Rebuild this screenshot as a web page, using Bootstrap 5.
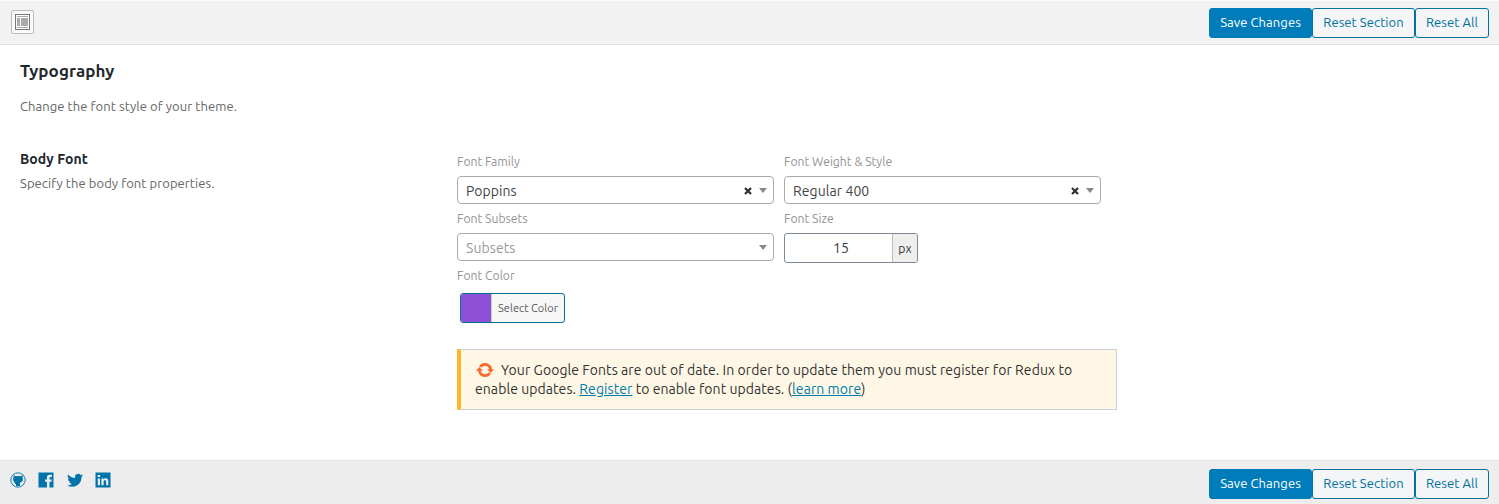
<!DOCTYPE html>
<html lang="en">
<head>
<meta charset="utf-8">
<meta name="viewport" content="width=device-width, initial-scale=1">
<title>Typography</title>
<link rel="stylesheet" href="https://cdn.jsdelivr.net/npm/bootstrap@5.3.0/dist/css/bootstrap.min.css">
<style>
body{font-family:Ubuntu,"Noto Sans","Open Sans",sans-serif;font-size:13px;line-height:19px;letter-spacing:.07px;color:#3c434a;background:#fff;height:504px;overflow:hidden}
.bar-top{height:45px;background:#f2f2f2;border-top:1px solid #fbfbfb;border-bottom:1px solid #dedede;padding:7px 10px 0 11px}
.bar-bottom{height:44px;background:#ededed;border-top:1px solid #e2e2e2;padding:8px 10px 0 10px}
.bar-actions .btn{height:30px;font-size:13px;line-height:26px;padding:0 0 2px;border-radius:3px;border-color:#0071a1;color:#0071a1;background:#f3f5f6;letter-spacing:.08px}
.bar-actions .btn-primary{background:#007cba;border-color:#007cba;color:#fff}
.w-save,.w-section{width:103px}
.w-all{width:74px}
.expand-btn{width:23px;height:24px;margin-top:2px;background:#fafafa;border:1px solid #bbb;border-radius:2px;padding:0;line-height:0}
.page-body{height:415px;padding-left:20px}
.page-title{font-size:17px;line-height:24px;font-weight:700;color:#23282d;margin:0;padding-top:14px}
.page-desc{color:#666;margin:14px 0 33px}
.field-col{width:437px}
.field-title{font-size:14px;font-weight:700;color:#23282d;line-height:20px}
.field-desc{color:#666;margin-top:5px}
.controls{padding-top:3px}
.control-row{gap:10px}
.control-row + .control-row{margin-top:5px}
.label-text{font-size:12.2px;line-height:20px;letter-spacing:0;color:#949494;display:block;height:24px}
.label-color{margin-top:3px}
.cell{width:317px}
.select-box{height:28px;border:1px solid #aaa;border-radius:4px;background:#fff;padding:0 6px 0 8px;font-size:14px;color:#444}
.select-box span{padding-top:2px}
.select-box.is-empty{color:#999}
.clear-x{margin:1px 7px 0 0}
.size-box{width:134px;height:30px;border:1px solid #7e8993;border-radius:3px;overflow:hidden;font-size:14px;color:#32373c}
.size-value{padding-left:5px}
.size-unit{width:25px;background:#eee;border-left:1px solid #bbb;font-size:12.3px}
.color-btn{width:105px;height:30px;border:1px solid #0071a1;border-radius:3px;background:#f7f7f7;overflow:hidden;margin:3px 0 0 3px;font-size:11px;letter-spacing:.04px;color:#555}
.swatch{width:31px;background:#8f50d8;border-right:1px solid #ccc}
.notice{width:660px;height:61px;margin-top:26px;background:#fff7e5;border:1px solid #ccd0d4;border-left:4px solid #ffb52b;padding:11px 14px;font-size:14px;line-height:19px;color:#333;white-space:nowrap}
.notice a{color:#007cae}
.notice svg{margin:-2px 7px 0 1px}
.social{color:#0073aa;gap:12.4px;padding-top:3px}
</style>
</head>
<body>
<header class="bar-top d-flex justify-content-between">
  <button class="expand-btn d-flex align-items-center justify-content-center" aria-label="Expand">
    <svg width="15" height="16" viewBox="0 0 15 16" shape-rendering="crispEdges"><path fill="#fff" stroke="#777" d="M.5.5h14v15H.5z"/><path fill="#aaa" d="M2 2h11v1H2zM2 4h3v8H2zM6 4h7v8H6zM2 13h11v1H2z"/></svg>
  </button>
  <div class="bar-actions d-flex"><button class="btn btn-primary w-save">Save Changes</button><button class="btn w-section">Reset Section</button><button class="btn w-all">Reset All</button></div>
</header>
<main class="page-body">
  <h1 class="page-title">Typography</h1>
  <p class="page-desc">Change the font style of your theme.</p>
  <div class="d-flex">
    <div class="field-col">
      <div class="field-title">Body Font</div>
      <div class="field-desc">Specify the body font properties.</div>
    </div>
    <div class="controls">
      <div class="control-row d-flex">
        <div class="cell"><label class="label-text">Font Family</label>
          <div class="select-box d-flex align-items-center"><span class="me-auto">Poppins</span><svg class="clear-x" width="8" height="8" viewBox="0 0 8 8"><path d="M1 1l6 6M7 1L1 7" stroke="#333" stroke-width="2.3"/></svg><svg width="8" height="5" viewBox="0 0 8 5"><path fill="#888" d="M0 0h8L4 5z"/></svg></div></div>
        <div class="cell"><label class="label-text">Font Weight &amp; Style</label>
          <div class="select-box d-flex align-items-center"><span class="me-auto">Regular 400</span><svg class="clear-x" width="8" height="8" viewBox="0 0 8 8"><path d="M1 1l6 6M7 1L1 7" stroke="#333" stroke-width="2.3"/></svg><svg width="8" height="5" viewBox="0 0 8 5"><path fill="#888" d="M0 0h8L4 5z"/></svg></div></div>
      </div>
      <div class="control-row d-flex">
        <div class="cell"><label class="label-text">Font Subsets</label>
          <div class="select-box is-empty d-flex align-items-center"><span class="me-auto">Subsets</span><svg width="8" height="5" viewBox="0 0 8 5"><path fill="#888" d="M0 0h8L4 5z"/></svg></div></div>
        <div><label class="label-text">Font Size</label>
          <div class="size-box d-flex"><span class="size-value flex-grow-1 d-flex align-items-center justify-content-center">15</span><span class="size-unit d-flex align-items-center justify-content-center">px</span></div></div>
      </div>
      <label class="label-text label-color">Font Color</label>
      <div class="color-btn d-flex"><span class="swatch"></span><span class="flex-grow-1 d-flex align-items-center justify-content-center">Select Color</span></div>
      <div class="notice"><svg width="18" height="16" viewBox="0 0 18 16"><g fill="none" stroke="#f9692d" stroke-width="2.8"><path d="M4.300 5A5.600 5.600 0 0 1 14.600 8"/><path d="M13.700 11A5.600 5.600 0 0 1 3.400 8"/></g><path fill="#f9692d" d="M11.200 7.200H18l-3.400 3.700zM0 8.800h6.800L3.400 5.100z"/></svg><span>Your Google Fonts are out of date. In order to update them you must register for Redux to</span><br><span>enable updates. <a href="#">Register</a> to enable font updates. (<a href="#">learn more</a>)</span></div>
    </div>
  </div>
</main>
<footer class="bar-bottom d-flex justify-content-between">
  <div class="social d-flex">
    <svg width="16" height="16" viewBox="0 0 16 16"><circle cx="8" cy="8" r="7.2" fill="none" stroke="currentColor" stroke-width=".9"/><path fill="currentColor" d="M3.600 3.200l2.200 1.100q2.200-.5 4.400 0l2.200-1.100.2 2.500q1.200 4-2.600 4.800v3.600H6v-2.200q-1.600.1-2.300-1.600 1.200.4 2.200.1Q2.200 9.700 3.400 5.700z"/></svg>
    <svg width="16" height="16" viewBox="0 0 16 16"><path fill="currentColor" d="M.5.5h15v15h-4V9.800h2l.3-2.300h-2.300V6q0-1.100 1.200-1.100h1.200V2.700h-2.100Q8.900 2.700 8.900 5.500v2H7v2.300h1.900v5.700H.5z"/></svg>
    <svg width="16" height="16" viewBox="0 0 16 16"><path fill="currentColor" d="M16 3.500a6 6 0 0 1-1.800.5 3 3 0 0 0 1.400-1.800 6 6 0 0 1-2 .8 3.200 3.200 0 0 0-5.500 3A9 9 0 0 1 1.200 2.500a3.200 3.200 0 0 0 1 4.300 3 3 0 0 1-1.400-.4 3.200 3.200 0 0 0 2.600 3.200 3 3 0 0 1-1.400 0 3.200 3.200 0 0 0 3 2.300A6.600 6.600 0 0 1 .3 13.300a9.200 9.200 0 0 0 14.100-8.200A6.500 6.500 0 0 0 16 3.500z"/></svg>
    <svg width="16" height="16" viewBox="0 0 16 16"><path fill="currentColor" d="M.5.5h15v15H.5z"/><path fill="#ededed" d="M2.800 6.400H5v6.800H2.800zM2.700 2.900h2.400v2.200H2.700zM6.400 6.400h2.100v1q.7-1.200 2.300-1.200 2.500 0 2.500 3v4h-2.200V9.700q0-1.600-1.200-1.600-1.300 0-1.300 1.600v3.500H6.400z"/></svg>
  </div>
  <div class="bar-actions d-flex"><button class="btn btn-primary w-save">Save Changes</button><button class="btn w-section">Reset Section</button><button class="btn w-all">Reset All</button></div>
</footer>
<script src="https://cdn.jsdelivr.net/npm/bootstrap@5.3.0/dist/js/bootstrap.bundle.min.js"></script>
</body>
</html>
